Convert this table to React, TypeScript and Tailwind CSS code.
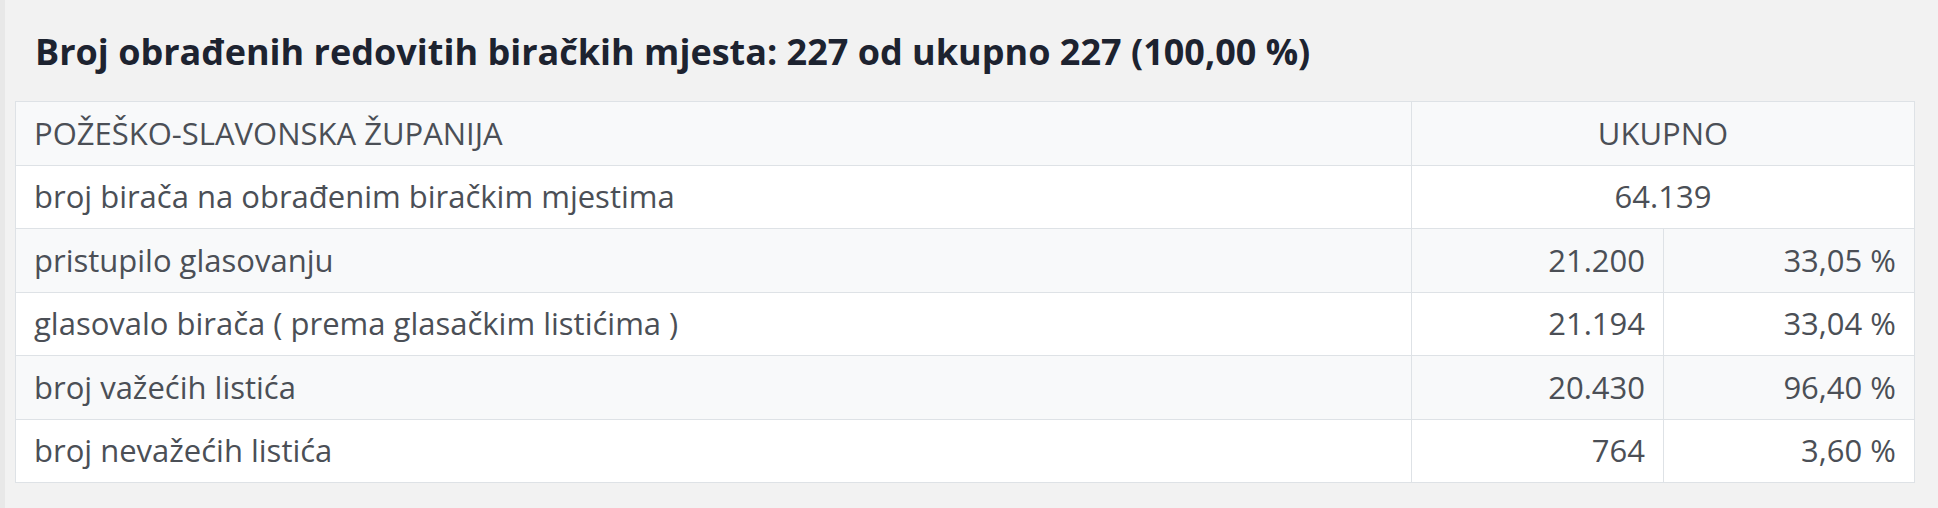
import React from "react";

const rows: { label: string; a?: string; b?: string; span?: string }[] = [
  { label: "broj birača na obrađenim biračkim mjestima", span: "64.139" },
  { label: "pristupilo glasovanju", a: "21.200", b: "33,05 %" },
  { label: "glasovalo birača ( prema glasačkim listićima )", a: "21.194", b: "33,04 %" },
  { label: "broj važećih listića", a: "20.430", b: "96,40 %" },
  { label: "broj nevažećih listića", a: "764", b: "3,60 %" },
];

export default function App() {
  return (
    <div
      className="flex h-[508px] w-[1938px] bg-[#f2f2f2]"
      style={{ fontFamily: '"Open Sans", "Noto Sans", sans-serif' }}
    >
      <div className="w-[5px] shrink-0 bg-[#e8e8e8]" />
      <div className="flex-1 pl-[10px] pr-[23px]">
        <h1 className="mt-[30px] ml-[20px] text-[36px] font-bold leading-[44px] text-[#1d2330]">
          Broj obrađenih redovitih biračkih mjesta: 227 od ukupno 227 (100,00 %)
        </h1>
        <table className="mt-[27px] w-full border-collapse text-[31px] text-[#4b4f56]">
          <colgroup>
            <col />
            <col className="w-[252px]" />
            <col className="w-[251px]" />
          </colgroup>
          <tbody>
            <tr className="bg-[#f8f9fa]">
              <td className="h-[63.5px] border border-[#dee2e6] px-[18px] py-0 leading-none">
                POŽEŠKO-SLAVONSKA ŽUPANIJA
              </td>
              <td colSpan={2} className="border border-[#dee2e6] px-[18px] py-0 text-center leading-none">
                UKUPNO
              </td>
            </tr>
            {rows.map((r, i) => (
              <tr key={i} className={i % 2 === 0 ? "bg-white" : "bg-[#f8f9fa]"}>
                <td className="h-[63.5px] border border-[#dee2e6] px-[18px] py-0 leading-none">
                  {r.label}
                </td>
                {r.span ? (
                  <td colSpan={2} className="border border-[#dee2e6] px-[18px] py-0 text-center leading-none">
                    {r.span}
                  </td>
                ) : (
                  <>
                    <td className="border border-[#dee2e6] px-[18px] py-0 text-right leading-none">{r.a}</td>
                    <td className="border border-[#dee2e6] px-[18px] py-0 text-right leading-none">{r.b}</td>
                  </>
                )}
              </tr>
            ))}
          </tbody>
        </table>
      </div>
    </div>
  );
}
